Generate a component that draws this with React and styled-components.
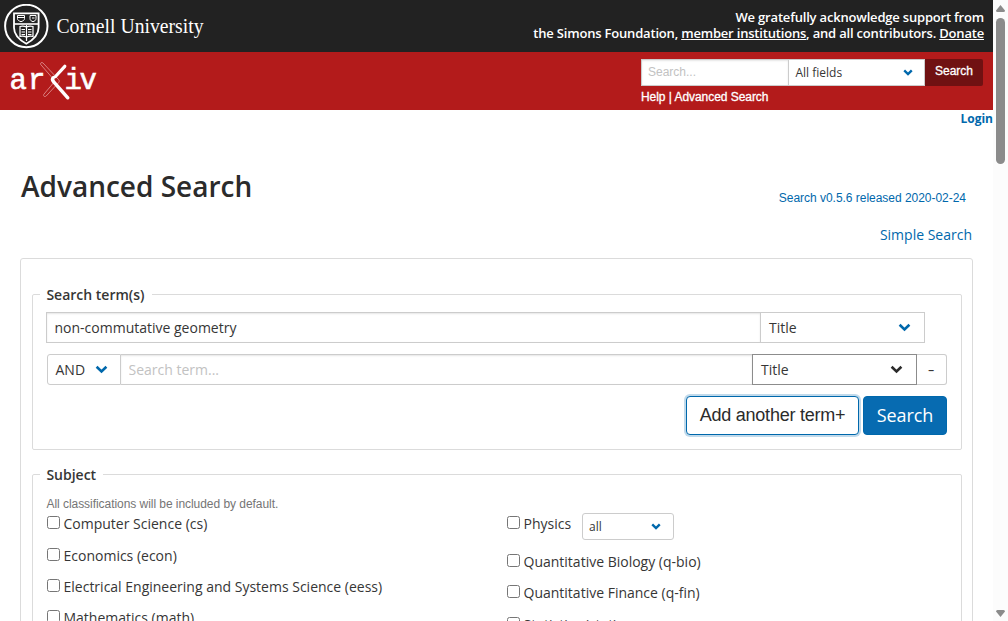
import React from "react";
import styled, { createGlobalStyle } from "styled-components";

const Global = createGlobalStyle`
  * { box-sizing: border-box; }
  body { margin: 0; background: #fff; color: #363636; overflow: hidden; font: 14px/20px "Open Sans", sans-serif; }
  input { font: inherit; color: inherit; outline: none; }
  input::placeholder { color: #c2c2c2; opacity: 1; }
  a { color: #0068ac; text-decoration: none; }
`;

const Window = styled.div`
  display: flex;
  width: 1008px;
  height: 621px;
  overflow: hidden;
`;
const Page = styled.div`
  width: 993px;
  height: 621px;
  overflow: hidden;
`;
const ScrollTrack = styled.div`
  width: 15px;
  height: 621px;
  padding: 5px 0 4px 3px;
  background: #fcfcfc;
  display: flex;
  flex-direction: column;
`;
const ScrollThumb = styled.div`
  width: 9px;
  height: 146px;
  margin: 5px 0 auto;
  border-radius: 5px;
  background: #8b8b8b;
`;
const CornellBar = styled.div`
  height: 52px;
  background: #222;
  color: #fff;
  display: flex;
  justify-content: space-between;
  padding: 4px 9px 0 4px;
`;
const CornellBrand = styled.div`
  display: flex;
  gap: 7px;
`;
const Thanks = styled.p`
  margin: 5px 0 0;
  text-align: right;
  font-size: 13px;
  font-weight: 600;
  line-height: 16px;
  letter-spacing: -0.19px;
  a { color: #fff; text-decoration: underline; }
`;
const ArxivBar = styled.div`
  height: 58px;
  background: #b31b1b;
  display: flex;
  justify-content: space-between;
  padding: 7px 10px 0 8px;
`;
const HeaderSearch = styled.div`
  width: 342px;
  font-size: 12px;
`;
const HeaderFields = styled.div`
  display: flex;
  height: 27px;
`;
const HeaderInput = styled.input`
  width: 147px;
  border: 1px solid #ccc;
  border-right: 0;
  padding: 0 6px 1px;
  box-shadow: inset 0 1px 2px rgba(10, 10, 10, 0.1);
  && { font: 12px "Liberation Sans", sans-serif; }
`;
const HeaderButton = styled.button`
  width: 58px;
  border: 0;
  border-radius: 0 2px 2px 0;
  background: #701112;
  color: #fff;
  padding: 0 0 3px;
  font: 12px "Liberation Sans", sans-serif;
  -webkit-text-stroke: 0.3px #fff;
`;
const HeaderLinks = styled.div`
  color: #fff;
  font: 12px/14px "Liberation Sans", sans-serif;
  letter-spacing: -0.05px;
  margin-top: 4px;
  -webkit-text-stroke: 0.3px #fff;
`;
const Login = styled.div`
  height: 62px;
  text-align: right;
  font-weight: 700;
  font-size: 12px;
  line-height: 17px;
`;
const TitleRow = styled.div`
  height: 49px;
  display: flex;
  justify-content: space-between;
  padding: 0 27px 0 21px;
`;
const Title = styled.h1`
  margin: -4px 0 0;
  font-size: 28px;
  line-height: 36px;
  font-weight: 600;
  color: #2b2b2b;
`;
const Version = styled.a`
  margin-top: 18px;
  font: 12px/16px "Liberation Sans", sans-serif;
  letter-spacing: -0.03px;
`;
const SimpleLink = styled.div`
  height: 37px;
  padding: 4px 21px 0 0;
  text-align: right;
`;
const Box = styled.main`
  margin: 0 20px;
  height: 500px;
  border: 1px solid #dbdbdb;
  border-radius: 3px;
  padding: 25px 10px 0 11px;
`;
const Fieldset = styled.fieldset`
  margin: 0 0 14px;
  height: ${(p) => p.$height}px;
  padding: 0 14px 0 13px;
  border: 1px solid #dbdbdb;
  border-radius: 2px;
  min-width: 0;
`;
const Legend = styled.legend`
  margin-left: -6px;
  padding: 0 7px 0 6.4px;
  height: 21px;
  line-height: 21px;
  font-weight: 600;
`;
const Row = styled.div`
  display: flex;
  height: 31px;
  margin: ${(p) => p.$margin};
`;
const TermInput = styled.input`
  flex: 1;
  min-width: 0;
  border: 1px solid #ccc;
  border-right: 0;
  border-left-width: ${(p) => (p.$joined ? 0 : 1)}px;
  padding: 0 7.5px;
  box-shadow: inset 0 1px 2px rgba(10, 10, 10, 0.1);
`;
const SelectFrame = styled.div`
  display: flex;
  align-items: center;
  justify-content: space-between;
  width: ${(p) => p.$width}px;
  height: ${(p) => p.$height || 31}px;
  margin: ${(p) => p.$margin || 0};
  padding: ${(p) => p.$padding || "0 13px 0 8px"};
  border: 1px solid ${(p) => (p.$active ? "#8c8c8c" : "#ccc")};
  border-radius: ${(p) => p.$radius || 0};
  background: #fff;
  color: #363636;
  font-size: ${(p) => p.$size || 14}px;
`;
const MinusButton = styled.button`
  width: 30px;
  border: 1px solid #ccc;
  border-left: 0;
  border-radius: 0 3px 3px 0;
  background: #fff;
  color: #363636;
  padding: 0;
  font: 14px "Open Sans", sans-serif;
  span { display: inline-block; transform: scaleX(1.5); }
`;
const Actions = styled.div`
  display: flex;
  justify-content: flex-end;
  gap: 4px;
  margin-top: 11px;
`;
const ActionButton = styled.button`
  height: 39px;
  width: ${(p) => p.$width}px;
  padding: 0 0 1px;
  border: 1px solid #0068ac;
  border-radius: 4px;
  background: ${(p) => (p.$primary ? "#076bb1" : "#fff")};
  color: ${(p) => (p.$primary ? "#fff" : "#2b2b2b")};
  font: 18px ${(p) => (p.$primary ? '"Open Sans"' : '"Liberation Sans"')}, sans-serif;
  letter-spacing: ${(p) => (p.$primary ? "-0.1px" : "-0.24px")};
  box-shadow: ${(p) => (p.$primary ? "none" : "0 0 0 2px rgba(7, 107, 177, 0.25)")};
`;
const Hint = styled.p`
  margin: 10px 0 0;
  padding: 2px 0 0 0.5px;
  height: 19px;
  color: #757575;
  font: 12px/14px "Liberation Sans", sans-serif;
  letter-spacing: -0.05px;
`;
const Columns = styled.div`
  display: grid;
  grid-template-columns: 460px 1fr;
  padding: 0 0 0 1px;
`;
const Check = styled.label`
  display: flex;
  height: ${(p) => p.$height || 31.4}px;
  white-space: nowrap;
  line-height: 19px;
  input { width: 13px; height: 13px; margin: 2px 3.5px 0 0; flex: none; }
`;

const Chevron = ({ color = "#0068ac", small }) => (
  <svg width={small ? 10 : 13} height={small ? 7 : 9} viewBox="0 0 13 9" fill="none">
    <path d="M1.6 1.8 6.5 6.5l4.9-4.7" stroke={color} strokeWidth={small ? 3.1 : 2.6} />
  </svg>
);

const Select = ({ label, color, small, ...rest }) => (
  <SelectFrame {...rest}>
    <span>{label}</span>
    <Chevron color={color} small={small} />
  </SelectFrame>
);

const Seal = () => (
  <svg width="45" height="45" viewBox="0 0 45 45" fill="none" stroke="#fff">
    <circle cx="22.3" cy="22" r="21.2" strokeWidth="2" />
    <path d="M10 9.300h24.600v14.500c0 7-6 12.500-12.300 16-6.300-3.500-12.300-9-12.300-16z" strokeWidth="1.800" />
    <path d="M10 20h25" strokeWidth="1.600" />
    <path d="M13.500 11.500h7v3c0 2-1.700 2.500-3.500 3.200-1.800-.7-3.500-1.200-3.500-3.200zM14 13.500h6" />
    <path d="M26 11.500h6v3c0 2-1.300 2.500-3 3.200-1.700-.7-3-1.200-3-3.200zM28 14h2.500" />
    <path d="M16 22.500c2-.7 4.500-.5 6.500.5 2-1 4.500-1.200 6.500-.5v10c-2-.5-4.500-.3-6.500.7-2-1-4.500-1.200-6.500-.7zM22.500 21v16M17.500 25.500h3.500M17.500 28h3.500M17.500 30.500h3.500M24 25.500h3.500M24 28h3.500M24 30.500h3.500" strokeWidth="1.200" />
  </svg>
);

const CornellName = () => (
  <svg width="156" height="45">
    <text x="0.5" y="29" fill="#fff" fontFamily="Liberation Serif, serif" fontSize="21" textLength="147" lengthAdjust="spacingAndGlyphs">
      Cornell University
    </text>
  </svg>
);

const ArxivLogo = () => (
  <svg width="92" height="44" viewBox="8 59 92 44" fill="none">
    <g fill="#fff" stroke="#fff" strokeWidth="0.6" fontFamily="Liberation Mono, monospace" fontSize="29">
      <text x="9.5" y="88.5">a</text>
      <text x="28" y="88.5">r</text>
      <text x="64.500" y="88.5">i</text>
      <text x="79.500" y="88.5">v</text>
    </g>
    <path
      d="M40.700 64.500c-.8-1.300 1-2.700 2.200-1.600L58.500 79.500c1 1 1 2 .2 3L46.200 96c-1.500 1.500-3.500-.2-2.200-1.900l11-13.100z"
      stroke="#e39b9b"
      strokeWidth="0.8"
      fill="#b31b1b"
    />
    <path d="M64.800 66.300 55.500 76.500" stroke="#fff" strokeWidth="3.200" strokeLinecap="round" />
    <path d="M53.500 77.500q-2 1.800 0 4.200L67.800 97.800" stroke="#fff" strokeWidth="3.400" strokeLinecap="round" />
  </svg>
);

const leftSubjects = [
  "Computer Science (cs)",
  "Economics (econ)",
  "Electrical Engineering and Systems Science (eess)",
  "Mathematics (math)",
];
const rightSubjects = ["Quantitative Biology (q-bio)", "Quantitative Finance (q-fin)", "Statistics (stat)"];

export default function App() {
  return (
    <Window>
      <Global />
      <Page>
        <CornellBar>
          <CornellBrand>
            <Seal />
            <CornellName />
          </CornellBrand>
          <Thanks>
            We gratefully acknowledge support from
            <br />
            the Simons Foundation, <a href="#members">member institutions</a>, and all contributors.{" "}
            <a href="#donate">Donate</a>
          </Thanks>
        </CornellBar>
        <ArxivBar>
          <ArxivLogo />
          <HeaderSearch>
            <HeaderFields>
              <HeaderInput placeholder="Search..." />
              <Select label="All fields" small $width={137} $height={27} $size={12} $padding="0 11px 0 6.500px" />
              <HeaderButton>Search</HeaderButton>
            </HeaderFields>
            <HeaderLinks>Help | Advanced Search</HeaderLinks>
          </HeaderSearch>
        </ArxivBar>
        <Login>
          <a href="#login">Login</a>
        </Login>
        <TitleRow>
          <Title>Advanced Search</Title>
          <Version href="#version">Search v0.5.6 released 2020-02-24</Version>
        </TitleRow>
        <SimpleLink>
          <a href="#simple">Simple Search</a>
        </SimpleLink>
        <Box>
          <Fieldset $height={166}>
            <Legend>Search term(s)</Legend>
            <Row $margin="7px 22px 0 0">
              <TermInput defaultValue="non-commutative geometry" />
              <Select label="Title" $width={165} />
            </Row>
            <Row $margin="11px 0 0 1px">
              <Select label="AND" $width={74} $radius="3px 0 0 3px" $padding="0 12px 0 7.500px" />
              <TermInput $joined placeholder="Search term..." />
              <Select label="Title" $width={165} color="#2b2b2b" $active />
              <MinusButton><span>-</span></MinusButton>
            </Row>
            <Actions>
              <ActionButton $width={173}>Add another term+</ActionButton>
              <ActionButton $width={84} $primary>Search</ActionButton>
            </Actions>
          </Fieldset>
          <Fieldset $height={300}>
            <Legend>Subject</Legend>
            <Hint>All classifications will be included by default.</Hint>
            <Columns>
              <div>
                {leftSubjects.map((s, i) => (
                  <Check key={s} $height={i === 0 ? 32 : 31.2}>
                    <input type="checkbox" />
                    {s}
                  </Check>
                ))}
              </div>
              <div>
                <Check $height={38}>
                  <input type="checkbox" />
                  Physics
                  <Select label="all" small $width={92} $height={27} $size={12} $margin="-1px 0 0 10.500px" $radius="3px" $padding="0 12px 0 6.500px" />
                </Check>
                {rightSubjects.map((s) => (
                  <Check key={s}>
                    <input type="checkbox" />
                    {s}
                  </Check>
                ))}
              </div>
            </Columns>
          </Fieldset>
        </Box>
      </Page>
      <ScrollTrack>
        <svg width="9" height="8"><path d="M4.500 0 9 5.500Q9 7 7.500 7h-6Q0 7 0 5.500z" fill="#8b8b8b" /></svg>
        <ScrollThumb />
        <svg width="9" height="7"><path d="M0 1.500Q0 0 1.500 0h6Q9 0 9 1.500L4.500 7z" fill="#8b8b8b" /></svg>
      </ScrollTrack>
    </Window>
  );
}
